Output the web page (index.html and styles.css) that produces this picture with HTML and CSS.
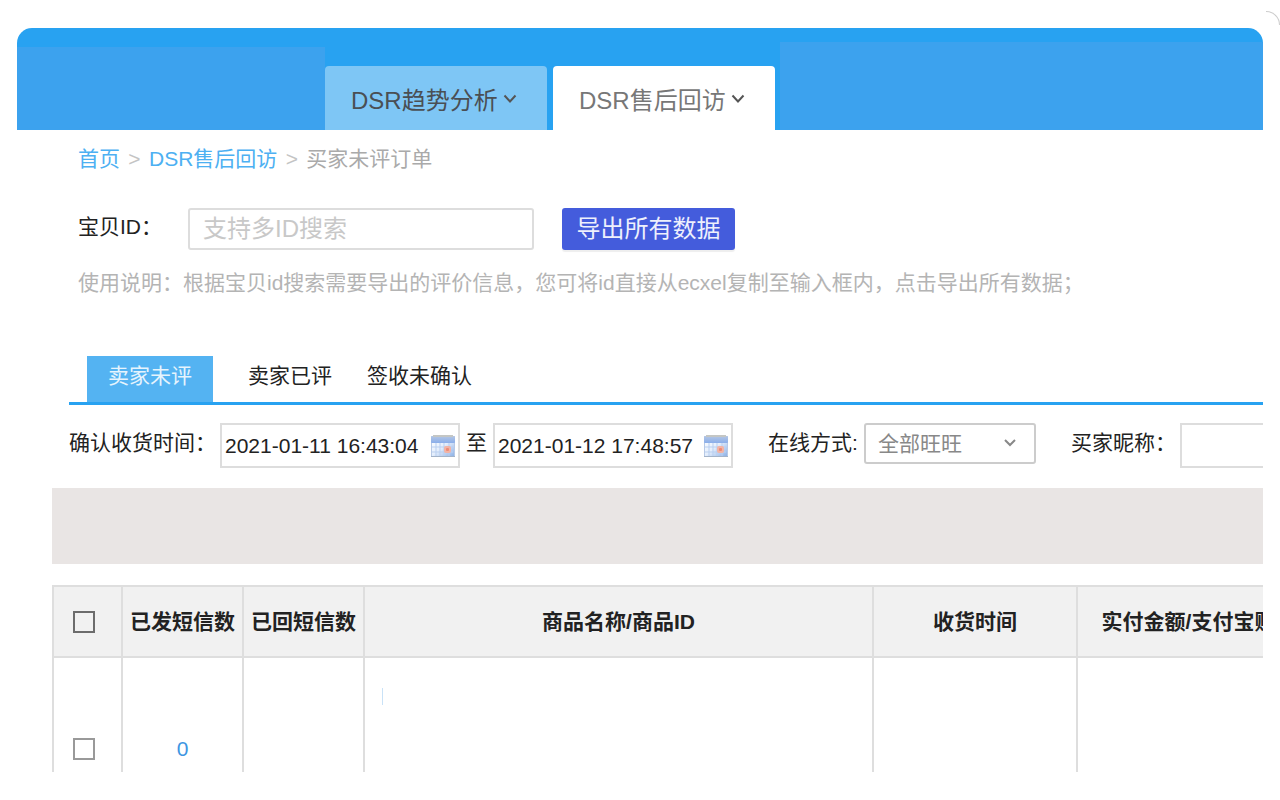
FILE: index.html
```html
<!DOCTYPE html>
<html lang="zh-CN">
<head>
<meta charset="utf-8">
<title>DSR售后回访</title>
<link rel="stylesheet" href="styles.css">
</head>
<body>
<div class="corner"></div>
<div class="frame">
  <header class="header">
    <div class="header-side header-left"></div>
    <nav class="main-tabs">
      <a class="main-tab" href="#trend">DSR趋势分析<svg class="chevron" viewBox="0 0 14 10"><path d="M1.500 1.500 L7 7.500 L12.500 1.500" /></svg></a>
      <a class="main-tab active" href="#visit">DSR售后回访<svg class="chevron" viewBox="0 0 14 10"><path d="M1.500 1.500 L7 7.500 L12.500 1.500" /></svg></a>
    </nav>
    <div class="header-side header-right"></div>
  </header>

  <main class="content">
    <nav class="breadcrumb">
      <a href="#home">首页</a><span class="sep">&gt;</span><a href="#visit">DSR售后回访</a><span class="sep">&gt;</span><span>买家未评订单</span>
    </nav>

    <form class="export">
      <label class="export-label" for="item-id">宝贝ID：</label>
      <input class="export-input" id="item-id" type="text" placeholder="支持多ID搜索">
      <button class="export-button" type="button">导出所有数据</button>
    </form>
    <p class="hint">使用说明：根据宝贝id搜索需要导出的评价信息，您可将id直接从ecxel复制至输入框内，点击导出所有数据；</p>

    <nav class="sub-tabs">
      <a class="sub-tab active" href="#unrated">卖家未评</a>
      <a class="sub-tab" href="#rated">卖家已评</a>
      <a class="sub-tab" href="#signed">签收未确认</a>
    </nav>

    <form class="filters">
      <label class="filter-label" for="date-from">确认收货时间：</label>
      <div class="date-field">
        <input id="date-from" type="text" value="2021-01-11 16:43:04">
        <svg class="calendar" viewBox="0 0 24 24"><use href="#calendar-icon"/></svg>
      </div>
      <label class="date-to-label" for="date-to">至</label>
      <div class="date-field">
        <input id="date-to" type="text" value="2021-01-12 17:48:57">
        <svg class="calendar" viewBox="0 0 24 24"><use href="#calendar-icon"/></svg>
      </div>
      <label class="online-label" for="online">在线方式:</label>
      <div class="select-field">
        <select id="online"><option>全部旺旺</option></select>
        <svg class="select-arrow" viewBox="0 0 14 10"><path d="M2 2 L7 7 L12 2" /></svg>
      </div>
      <label class="nick-label" for="nick">买家昵称：</label>
      <input class="nick-input" id="nick" type="text">
    </form>

    <div class="toolbar"></div>

    <table class="orders">
      <colgroup><col class="c-check"><col class="c-count"><col class="c-count"><col class="c-item"><col class="c-time"><col class="c-pay"></colgroup>
      <thead>
        <tr>
          <th><input class="check check-all" type="checkbox" aria-label="全选"></th>
          <th>已发短信数</th>
          <th>已回短信数</th>
          <th>商品名称/商品ID</th>
          <th>收货时间</th>
          <th>实付金额/支付宝账号</th>
        </tr>
      </thead>
      <tbody>
        <tr>
          <td><input class="check" type="checkbox" aria-label="选择订单"></td>
          <td><a href="#sms">0</a></td>
          <td></td>
          <td class="item-cell"><div class="item-mark"></div></td>
          <td></td>
          <td></td>
        </tr>
      </tbody>
    </table>
  </main>
</div>

<svg class="defs" width="0" height="0">
  <defs>
    <linearGradient id="cal-top" x1="0" y1="0" x2="0" y2="1"><stop offset="0" stop-color="#b4c6e4"/><stop offset="1" stop-color="#8aaeea"/></linearGradient>
    <linearGradient id="cal-body" x1="0" y1="0" x2="1" y2="1"><stop offset="0" stop-color="#ffffff"/><stop offset="0.500" stop-color="#e4eefc"/><stop offset="1" stop-color="#8fb2e6"/></linearGradient>
    <symbol id="calendar-icon" viewBox="0 0 24 24">
      <rect x="0" y="2" width="24" height="21" rx="1" fill="#b7c9e6"/>
      <rect x="1" y="3" width="22" height="19" fill="url(#cal-body)"/>
      <rect x="0" y="2" width="24" height="7" rx="1" fill="url(#cal-top)"/>
      <path d="M2 2H22" stroke="#c4c6c4" stroke-width="2"/>
      <path d="M1 13H22M1 18H22M5 9V22M9 9V22M13 9V22M18 9V22" stroke="#b9cff0" stroke-width="1" fill="none"/>
      <rect x="13" y="12" width="7" height="7" rx="2" fill="#f3b3a4"/>
      <rect x="15" y="14" width="3" height="3" rx="1" fill="#ee8a76"/>
      <path d="M0 22.500H24" stroke="#a3b3c8" stroke-width="1"/>
    </symbol>
  </defs>
</svg>
</body>
</html>
```
FILE: styles.css
```css
* {
  box-sizing: border-box;
}

body {
  margin: 0;
  height: 100vh;
  padding: 28px 17px;
  display: flex;
  background: #fff;
  color: #222;
  font: 21px/30px "Liberation Sans", "Noto Sans CJK SC", sans-serif;
  overflow: hidden;
}

a {
  color: inherit;
  text-decoration: none;
}

input,
select,
button {
  font: inherit;
  color: inherit;
  margin: 0;
}

.corner {
  position: absolute;
  top: 11px;
  right: 0;
  width: 14px;
  height: 14px;
  border-top: 1px solid #ccc;
  border-right: 1px solid #ccc;
  border-top-right-radius: 14px;
}

.frame {
  flex: 1;
  min-width: 0;
  overflow: hidden;
  border-radius: 15px 15px 0 0;
}

.header {
  display: flex;
  align-items: flex-end;
  height: 102px;
  background: #28a2f1;
}

.header-side {
  background: #3ca2ee;
}

.header-left {
  width: 308px;
  height: 83px;
}

.header-right {
  flex: 1;
  height: 88px;
}

.main-tabs {
  display: flex;
  gap: 6px;
  padding-right: 5px;
}

.main-tab {
  display: flex;
  align-items: center;
  gap: 5px;
  width: 222px;
  height: 64px;
  padding: 6px 0 0 26px;
  border-radius: 4px 4px 0 0;
  background: #7ec6f5;
  color: #4a4f54;
  font-size: 24px;
}

.main-tab.active {
  background: #fff;
  color: #777;
}

.chevron {
  width: 14px;
  height: 10px;
  margin-bottom: 4px;
  fill: none;
  stroke: #555;
  stroke-width: 2;
}

.content {
  padding-left: 35px;
}

.breadcrumb {
  display: flex;
  padding: 14px 0 0 26px;
  color: #aaa;
}

.breadcrumb a {
  color: #4db0f2;
}

.sep {
  width: 29px;
  text-align: center;
  color: #c4c4c4;
}

.export {
  display: flex;
  padding: 34px 0 0 26px;
}

.export-label {
  width: 110px;
  padding-top: 4px;
}

.export-input {
  width: 346px;
  height: 42px;
  padding: 0 13px;
  border: 2px solid #ddd;
  border-radius: 3px;
  font-size: 24px;
}

.export-input::placeholder {
  color: #c8c8c8;
}

.export-button {
  width: 173px;
  height: 42px;
  margin-left: 28px;
  padding: 0;
  border: 0;
  border-radius: 3px;
  background: #445cdc;
  box-shadow: 0 2px 1px #eee;
  color: #eef0fc;
  font-size: 24px;
}

.hint {
  margin: 0;
  padding: 18px 0 0 26px;
  color: #b4b4b4;
  white-space: nowrap;
}

.sub-tabs {
  display: flex;
  gap: 35px;
  margin: 58px 0 0 17px;
  padding-left: 18px;
  border-bottom: 3px solid #28a2f1;
}

.sub-tab {
  height: 46px;
  padding-top: 5px;
}

.sub-tab.active {
  width: 126px;
  background: #54b3f2;
  color: #e6f4fd;
  text-align: center;
}

.filters {
  display: flex;
  align-items: flex-start;
  height: 83px;
  padding: 18px 0 0 17px;
}

.filters > * {
  flex: none;
}

.filters label {
  padding-top: 5px;
}

.filter-label {
  width: 151px;
}

.date-field {
  display: flex;
  align-items: center;
  width: 240px;
  height: 45px;
  padding: 0 3px;
  border: 2px solid #ddd;
}

.date-field input {
  flex: 1;
  min-width: 0;
  padding: 0;
  border: 0;
  background: none;
}

.calendar {
  width: 24px;
  height: 24px;
}

.date-to-label {
  width: 33px;
  text-align: center;
}

.online-label {
  width: 131px;
  padding-left: 35px;
}

.select-field {
  position: relative;
}

.select-field select {
  width: 172px;
  height: 41px;
  padding: 0 12px;
  border: 2px solid #ccc;
  border-radius: 3px;
  background: #fff;
  color: #888;
  appearance: none;
}

.select-arrow {
  position: absolute;
  top: 15px;
  right: 19px;
  width: 14px;
  height: 10px;
  fill: none;
  stroke: #888;
  stroke-width: 2;
  pointer-events: none;
}

.nick-label {
  width: 144px;
  padding-left: 35px;
}

.nick-input {
  width: 240px;
  height: 45px;
  border: 2px solid #ddd;
}

.toolbar {
  height: 76px;
  background: #e9e5e4;
}

.orders {
  width: 1270px;
  margin-top: 21px;
  border-collapse: collapse;
  table-layout: fixed;
}

.c-check { width: 69px; }
.c-count { width: 121px; }
.c-item { width: 509px; }
.c-time { width: 204px; }

.orders th,
.orders td {
  padding: 0;
  border: 2px solid #dedede;
  text-align: center;
  vertical-align: middle;
}

.orders th {
  height: 71px;
  background: #f1f1f1;
  font-weight: 700;
  white-space: nowrap;
}

.orders td {
  height: 184px;
}

.orders td a {
  color: #3d96e2;
}

.orders .item-cell {
  padding: 30px 0 0 17px;
  vertical-align: top;
}

.item-mark {
  width: 1px;
  height: 17px;
  background: #c9e2f7;
}

.check {
  display: block;
  width: 22px;
  height: 22px;
  margin: 0 auto 0 19px;
  border: 2px solid #999;
  background: transparent;
  appearance: none;
}

.check-all {
  border-color: #6c6c6c;
}

.defs {
  position: absolute;
}
```
